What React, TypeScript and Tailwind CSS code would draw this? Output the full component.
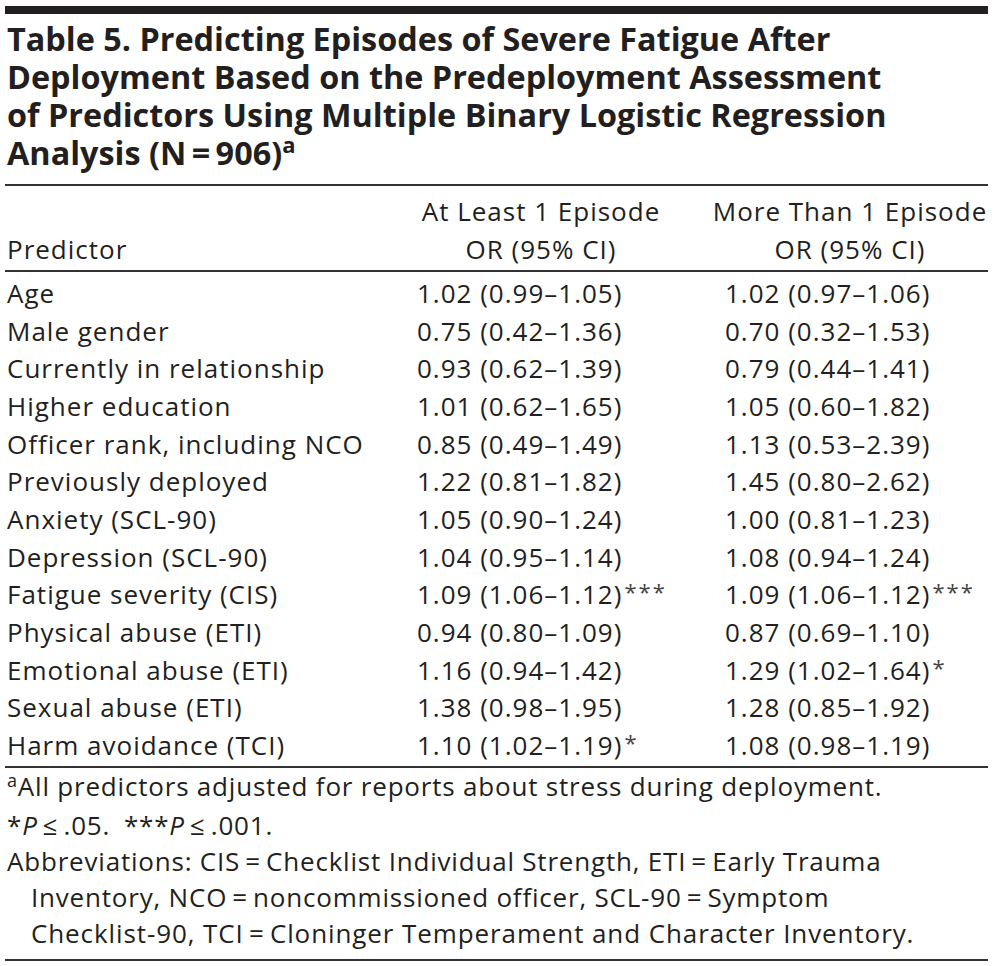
const rows: [string, string, string, string?, string?][] = [
  ['Age', '1.02 (0.99–1.05)', '1.02 (0.97–1.06)'],
  ['Male gender', '0.75 (0.42–1.36)', '0.70 (0.32–1.53)'],
  ['Currently in relationship', '0.93 (0.62–1.39)', '0.79 (0.44–1.41)'],
  ['Higher education', '1.01 (0.62–1.65)', '1.05 (0.60–1.82)'],
  ['Officer rank, including NCO', '0.85 (0.49–1.49)', '1.13 (0.53–2.39)'],
  ['Previously deployed', '1.22 (0.81–1.82)', '1.45 (0.80–2.62)'],
  ['Anxiety (SCL-90)', '1.05 (0.90–1.24)', '1.00 (0.81–1.23)'],
  ['Depression (SCL-90)', '1.04 (0.95–1.14)', '1.08 (0.94–1.24)'],
  ['Fatigue severity (CIS)', '1.09 (1.06–1.12)', '1.09 (1.06–1.12)', '***', '***'],
  ['Physical abuse (ETI)', '0.94 (0.80–1.09)', '0.87 (0.69–1.10)'],
  ['Emotional abuse (ETI)', '1.16 (0.94–1.42)', '1.29 (1.02–1.64)', '', '*'],
  ['Sexual abuse (ETI)', '1.38 (0.98–1.95)', '1.28 (0.85–1.92)'],
  ['Harm avoidance (TCI)', '1.10 (1.02–1.19)', '1.08 (0.98–1.19)', '*', ''],
];

const eq = '\u2009=\u2009';

function Stars({ s }: { s?: string }) {
  if (!s) return null;
  return <span className="relative -top-[4px] ml-[2px] text-[22px] tracking-[2px] text-[#444]">{s}</span>;
}

export default function App() {
  return (
    <div className="min-h-screen bg-white text-[#231f20] font-['Open_Sans',sans-serif]">
      <div className="ml-[5px] w-[983px] pt-[6px]">
        <div className="h-[8px] bg-[#231f20]" />

        <h1 className="mt-[5px] px-[2px] text-[32.4px] font-bold leading-[38px] whitespace-nowrap">
          Table 5. Predicting Episodes of Severe Fatigue After<br />
          Deployment Based on the Predeployment Assessment<br />
          of Predictors Using Multiple Binary Logistic Regression<br />
          Analysis (N{eq}906)
          <span className="relative -top-[12px] text-[22px]">a</span>
        </h1>

        <div className="mt-[9px] border-t-2 border-[#333]" />

        <div className="grid grid-cols-[390px_292px_1fr] text-[26px] tracking-[1px]">
          {/* header */}
          <div className="col-span-3 grid grid-cols-subgrid border-b-2 border-[#333] pt-[6px] pb-[2px] leading-[38px]">
            <div className="self-end px-[2px]">Predictor</div>
            <div className="text-center whitespace-nowrap">
              At Least 1 Episode<br />OR (95% CI)
            </div>
            <div className="pl-[25px] text-center whitespace-nowrap">
              More Than 1 Episode<br />OR (95% CI)
            </div>
          </div>

          <div className="col-span-3 grid grid-cols-subgrid border-b-2 border-[#333] pt-[3px] pb-[1px] leading-[37.67px]">
            {rows.map(([name, a, b, sa, sb]) => (
              <div key={name} className="col-span-3 grid h-[37.67px] grid-cols-subgrid">
                <div className="px-[2px] whitespace-nowrap">{name}</div>
                <div className="pl-[22px] whitespace-nowrap">
                  {a}
                  <Stars s={sa} />
                </div>
                <div className="pl-[38px] whitespace-nowrap">
                  {b}
                  <Stars s={sb} />
                </div>
              </div>
            ))}
          </div>
        </div>

        <div className="px-[2px] pb-[8px] text-[26px] leading-[36px] tracking-[0.8px] whitespace-nowrap">
          <p>
            <span className="relative -top-[9px] text-[18px]">a</span>All predictors adjusted for reports about stress
            during deployment.
          </p>
          <p>
            *<i>P</i>{'\u2009'}≤{'\u2009'}.05.{'\u2002'}***<i>P</i>{'\u2009'}≤{'\u2009'}.001.
          </p>
          <p className="pl-[24px] -indent-[24px]">
            Abbreviations: CIS{eq}Checklist Individual Strength, ETI{eq}Early Trauma
            <br />
            Inventory, NCO{eq}noncommissioned officer, SCL-90{eq}Symptom
            <br />
            <span className="tracking-[0.9px]">Checklist-90, TCI{eq}Cloninger Temperament and Character Inventory.</span>
          </p>
        </div>

        <div className="border-t-2 border-[#333]" />
      </div>
    </div>
  );
}
